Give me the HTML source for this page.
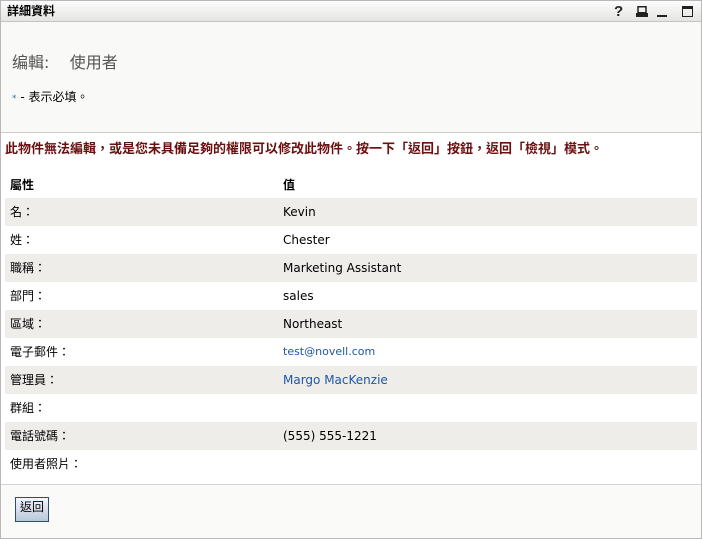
<!DOCTYPE html>
<html><head><meta charset="utf-8"><style>
*{margin:0;padding:0;box-sizing:border-box}
body{width:702px;height:539px;background:#fff;font-family:"DejaVu Sans","Noto Sans CJK TC",sans-serif;font-size:12px;color:#000;position:relative;overflow:hidden}
.frame{position:absolute;left:0;top:0;width:702px;height:539px;border:1px solid #b8b8b8}
.title{position:absolute;left:1px;top:1px;width:700px;height:21px;background:linear-gradient(#fdfdfd,#e4e4e2);border-bottom:1px solid #c4c4c4;font-weight:bold;font-size:12px;line-height:21px;padding-left:6px;font-family:"Liberation Sans","Noto Sans CJK TC",sans-serif}
.upper{position:absolute;left:1px;top:22px;width:700px;height:111px;background:#f9f9f7;border-bottom:1px solid #ccc}
.h{position:absolute;left:12px;top:49px;font-size:16px;color:#555}
.req{position:absolute;left:12px;top:88px;font-size:12px}
.msg{position:absolute;left:5px;top:138px;color:#6b1010;font-weight:bold;font-size:13px;font-family:"Liberation Sans","Noto Sans CJK TC",sans-serif}
.hdr{position:absolute;top:176px;font-weight:bold;font-size:12px}
.row{position:absolute;left:5px;width:692px;height:28px;line-height:28px}
.row.g{background:#efede9}
.row span{position:absolute}
.row .a{left:5px}.row .b{left:278px}
a{color:#1e56a8;text-decoration:none}
.foot{position:absolute;left:1px;top:484px;width:700px;height:54px;background:#fafaf8;border-top:1px solid #d4d4d4}
.btn{position:absolute;left:15px;top:497px;width:34px;height:25px;border:1px solid #2a4d7a;background:linear-gradient(#f4f6fa,#b9c8dc);font-size:12px;text-align:center;line-height:19px}
</style></head><body>
<div class="frame"></div>
<div class="title">詳細資料</div>
<span style="position:absolute;left:614px;top:3px;font-size:15px;font-weight:bold;color:#222;font-family:'Liberation Sans',sans-serif">?</span>
<svg style="position:absolute;left:636px;top:6px" width="12" height="12"><rect x="2" y="0.75" width="8" height="6" fill="none" stroke="#222" stroke-width="1.5"/><rect x="0" y="7" width="12" height="4" fill="#222"/></svg>
<svg style="position:absolute;left:657px;top:6px" width="10" height="12"><rect x="0" y="9" width="10" height="2" fill="#222"/></svg>
<svg style="position:absolute;left:682px;top:6px" width="11" height="12"><rect x="0.5" y="0.5" width="10" height="10" fill="none" stroke="#222"/><rect x="0" y="0" width="11" height="3" fill="#222"/></svg>
<div class="upper"></div>
<div class="h">编輯:&nbsp;&nbsp;&nbsp;&nbsp;使用者</div>
<div class="req"><span style="color:#3a6fb0;font-size:9px">*</span> - 表示必填。</div>
<div class="msg">此物件無法編輯，或是您未具備足夠的權限可以修改此物件。按一下「返回」按鈕，返回「檢視」模式。</div>
<div class="hdr" style="left:10px">屬性</div>
<div class="hdr" style="left:283px">值</div>
<div class="row g" style="top:198px"><span class="a">名：</span><span class="b">Kevin</span></div>
<div class="row" style="top:226px"><span class="a">姓：</span><span class="b">Chester</span></div>
<div class="row g" style="top:254px"><span class="a">職稱：</span><span class="b">Marketing Assistant</span></div>
<div class="row" style="top:282px"><span class="a">部門：</span><span class="b">sales</span></div>
<div class="row g" style="top:310px"><span class="a">區域：</span><span class="b">Northeast</span></div>
<div class="row" style="top:338px"><span class="a">電子郵件：</span><span class="b" style="font-size:11px"><a>test@novell.com</a></span></div>
<div class="row g" style="top:366px"><span class="a">管理員：</span><span class="b"><a>Margo MacKenzie</a></span></div>
<div class="row" style="top:394px"><span class="a">群組：</span></div>
<div class="row g" style="top:422px"><span class="a">電話號碼：</span><span class="b">(555) 555-1221</span></div>
<div class="row" style="top:450px"><span class="a">使用者照片：</span></div>
<div class="foot"></div>
<div class="btn">返回</div>
</body></html>
